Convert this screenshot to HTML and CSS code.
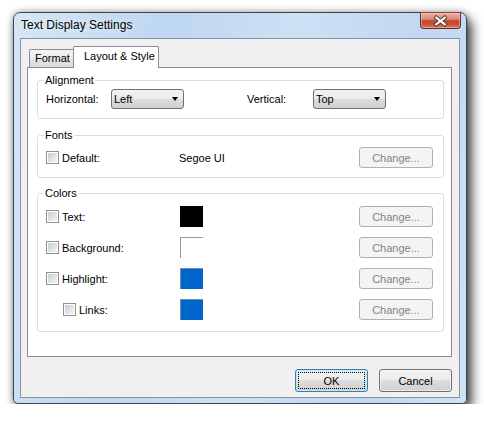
FILE: index.html
```html
<!DOCTYPE html>
<html>
<head>
<meta charset="utf-8">
<title>Text Display Settings</title>
<link rel="stylesheet" href="styles.css">
</head>
<body>
<div class="window">
  <div class="titlebar">
    <span class="title">Text Display Settings</span>
    <div class="close">
      <svg width="41" height="16" viewBox="0 0 41 16">
        <path d="M16 4.5 L25 11.5 M25 4.5 L16 11.5" stroke="#5b3a36" stroke-width="4.2" stroke-linecap="square" fill="none"/>
        <path d="M16 4.5 L25 11.5 M25 4.5 L16 11.5" stroke="#ffffff" stroke-width="2.2" stroke-linecap="square" fill="none"/>
      </svg>
    </div>
  </div>
  <div class="client">
    <div class="tabs">
      <div class="tab">Format</div>
      <div class="tab active">Layout &amp; Style</div>
    </div>
    <div class="panel">
      <fieldset class="group g-align">
        <legend>Alignment</legend>
        <div class="arow">
          <span class="lbl">Horizontal:</span>
          <div class="select"><span>Left</span><span class="arrow"></span></div>
          <span class="lbl lbl-v">Vertical:</span>
          <div class="select"><span>Top</span><span class="arrow"></span></div>
        </div>
      </fieldset>
      <fieldset class="group g-fonts">
        <legend>Fonts</legend>
        <div class="crow">
          <div class="first"><span class="cb"></span><span>Default:</span></div>
          <span class="fontname">Segoe UI</span>
          <button class="change">Change...</button>
        </div>
      </fieldset>
      <fieldset class="group g-colors">
        <legend>Colors</legend>
        <div class="rows">
          <div class="crow">
            <div class="first"><span class="cb"></span><span>Text:</span></div>
            <span class="swatch black"></span>
            <button class="change">Change...</button>
          </div>
          <div class="crow">
            <div class="first"><span class="cb"></span><span>Background:</span></div>
            <span class="swatch white"></span>
            <button class="change">Change...</button>
          </div>
          <div class="crow">
            <div class="first"><span class="cb"></span><span>Highlight:</span></div>
            <span class="swatch blue"></span>
            <button class="change">Change...</button>
          </div>
          <div class="crow">
            <div class="first indent"><span class="cb"></span><span>Links:</span></div>
            <span class="swatch blue"></span>
            <button class="change">Change...</button>
          </div>
        </div>
      </fieldset>
    </div>
    <div class="actions">
      <button class="btn ok"><span class="focus">OK</span></button>
      <button class="btn">Cancel</button>
    </div>
  </div>
</div>
</body>
</html>
```
FILE: styles.css
```css
body {
  margin: 0;
  background: #ffffff;
  font-family: "Liberation Sans", Arial, sans-serif;
  font-size: 11px;
  color: #000;
}

.window {
  margin: 12px 0 0 13px;
  width: 454px;
  height: 392px;
  box-sizing: border-box;
  border: 1px solid #3c434b;
  border-radius: 7px 7px 5px 5px;
  background: linear-gradient(100deg, #d6e6f6 0%, #bed6f0 30%, #cde1f5 55%, #c0d7f1 80%, #d0e3f6 100%);
  box-shadow: 5px 7px 12px rgba(0, 0, 0, 0.7), 0 0 7px rgba(0, 0, 0, 0.35);
  display: flex;
  flex-direction: column;
}

.titlebar {
  height: 25px;
  display: flex;
  justify-content: space-between;
  align-items: flex-start;
  padding: 0 5px 0 7px;
}

.title {
  margin-top: 5px;
  font-size: 12px;
  line-height: 14px;
  color: #000;
  text-shadow: 0 0 6px rgba(255, 255, 255, 0.9);
}

.close {
  margin-top: -1px;
  width: 41px;
  height: 17px;
  box-sizing: border-box;
  border: 1px solid #6b2c22;
  border-top-color: #8a4236;
  border-radius: 0 0 4px 4px;
  background: linear-gradient(#eab0a3 0%, #dd8e7d 40%, #c4472f 52%, #c84f36 75%, #dc7c62 100%);
  box-shadow: inset 0 0 0 1px rgba(255, 210, 200, 0.45);
  display: flex;
}

.close svg {
  display: block;
}

.client {
  margin: 0 6px;
  height: 360px;
  box-sizing: border-box;
  border: 1px solid #8494a6;
  background: #f0f0f0;
  padding: 7px 7px 0 6px;
}

.tabs {
  display: flex;
  align-items: flex-end;
  height: 21px;
  padding-left: 2px;
}

.tab {
  height: 18px;
  box-sizing: border-box;
  width: 44px;
  border: 1px solid #898c95;
  border-bottom: none;
  border-right: none;
  padding: 2px 0 0 5px;
  line-height: 13px;
  background: linear-gradient(#f3f3f3 0%, #ececec 50%, #e0e0e0 51%, #dcdcdc 100%);
  border-radius: 2px 0 0 0;
}

.tab.active {
  position: relative;
  z-index: 1;
  width: 86px;
  height: 22px;
  margin-bottom: -1px;
  border-right: 1px solid #898c95;
  padding: 3px 0 0 10px;
  background: #ffffff;
  border-radius: 2px 2px 0 0;
}

.panel {
  height: 290px;
  box-sizing: border-box;
  border: 1px solid #898c95;
  background: #ffffff;
  padding: 6px 7px 0 9px;
}

.group {
  margin: 0;
  min-width: 0;
  border: 1px solid #d5dfe5;
  border-radius: 3px;
  padding: 0 10px 0 8px;
}

.group legend {
  padding: 0 1px;
  margin-left: -2px;
  line-height: 13px;
}

.g-align {
  padding-top: 2px;
  padding-bottom: 9px;
}

.g-fonts {
  margin-top: 10px;
  padding-top: 5px;
  padding-bottom: 9px;
}

.g-colors {
  margin-top: 9px;
  padding-top: 6px;
  padding-bottom: 11px;
}

.arow {
  display: flex;
  align-items: center;
  height: 20px;
}

.lbl {
  width: 65px;
}

.lbl-v {
  margin-left: 63px;
  width: 66px;
}

.select {
  width: 73px;
  height: 20px;
  box-sizing: border-box;
  border: 1px solid #707070;
  border-radius: 3px;
  background: linear-gradient(#f2f2f2 0%, #ebebeb 50%, #dddddd 50%, #cfcfcf 100%);
  display: flex;
  align-items: center;
  justify-content: space-between;
  padding: 0 5px 0 2px;
}

.arrow {
  width: 0;
  height: 0;
  border-left: 3.5px solid transparent;
  border-right: 3.5px solid transparent;
  border-top: 4px solid #000;
}

.rows {
  display: flex;
  flex-direction: column;
  gap: 10px;
}

.crow {
  display: flex;
  align-items: center;
  height: 21px;
}

.first {
  width: 134px;
  box-sizing: border-box;
  display: flex;
  align-items: center;
  gap: 3px;
}

.first.indent {
  padding-left: 17px;
}

.fontname {
  margin-left: -1px;
}

.cb {
  width: 13px;
  height: 13px;
  box-sizing: border-box;
  border: 1px solid #8e8f8f;
  padding: 1px;
  background: linear-gradient(135deg, #cbcbcb, #f6f6f6) content-box, #ffffff;
}

.swatch {
  width: 23px;
  height: 21px;
  box-sizing: border-box;
  border-top: 1px solid #9a9a9a;
  border-left: 1px solid #9a9a9a;
}

.swatch.black { background: #000000; border-color: #000000; }
.swatch.white { background: #ffffff; }
.swatch.blue { background: #0066cc; border-color: #6f8fb0; }

.change {
  margin-left: auto;
  width: 74px;
  height: 21px;
  box-sizing: border-box;
  border: 1px solid #adb2b5;
  border-radius: 3px;
  background: #f4f4f4;
  color: #838383;
  font: inherit;
  padding: 0;
}

.actions {
  display: flex;
  justify-content: flex-end;
  gap: 11px;
  margin-top: 12px;
}

.btn {
  width: 73px;
  height: 23px;
  box-sizing: border-box;
  border: 1px solid #707070;
  border-radius: 3px;
  background: linear-gradient(#f2f2f2 0%, #ebebeb 50%, #dddddd 50%, #cfcfcf 100%);
  font: inherit;
  color: #000;
  padding: 0;
  box-shadow: inset 0 0 0 1px rgba(255, 255, 255, 0.6);
}

.btn.ok {
  border-color: #3c7fb1;
  box-shadow: inset 0 0 0 1px #bfe3f7;
  display: flex;
  padding: 2px;
}

.focus {
  flex: 1;
  border: 1px dotted #000;
  display: flex;
  align-items: center;
  justify-content: center;
}
```
